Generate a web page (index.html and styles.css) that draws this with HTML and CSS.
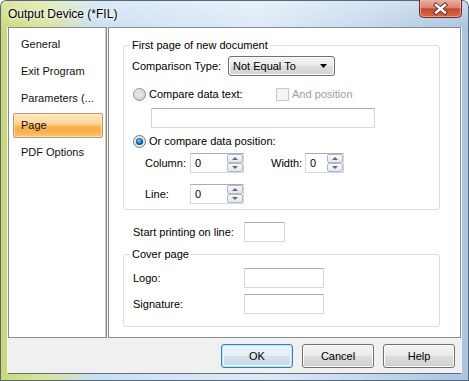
FILE: index.html
```html
<!DOCTYPE html>
<html lang="en">
<head>
    <meta charset="UTF-8">
    <title>Output Device (*FIL)</title>
    <link rel="stylesheet" href="styles.css">
</head>
<body>
    <div class="window">
        <div class="titlebar">
            <span class="title">Output Device (*FIL)</span>
            <button class="close" aria-label="Close">
                <svg width="43" height="18" viewBox="0 0 43 18">
                    <defs>
                        <linearGradient id="closeGrad" x1="0" y1="0" x2="0" y2="1">
                            <stop offset="0" stop-color="#eab3a3"/>
                            <stop offset="0.45" stop-color="#d9826c"/>
                            <stop offset="0.5" stop-color="#c9482c"/>
                            <stop offset="1" stop-color="#d76a48"/>
                        </linearGradient>
                    </defs>
                    <path d="M0.5 0 V13.5 Q0.5 17.5 4.5 17.5 H38.5 Q42.5 17.5 42.5 13.5 V0" fill="url(#closeGrad)" stroke="#6b2b22"/>
                    <path d="M1.5 0 V13 Q1.5 16.5 5 16.5 H38 Q41.5 16.5 41.5 13 V0" fill="none" stroke="#f2c8bb" stroke-opacity="0.6"/>
                    <path d="M17 5 L26 12.5 M26 5 L17 12.5" stroke="#4a2a26" stroke-width="4.2" stroke-linecap="square"/>
                    <path d="M17 5 L26 12.5 M26 5 L17 12.5" stroke="#ffffff" stroke-width="2.4" stroke-linecap="square"/>
                </svg>
            </button>
        </div>

        <div class="client">
            <div class="panels">
                <ul class="nav">
                    <li>General</li>
                    <li>Exit Program</li>
                    <li>Parameters (...</li>
                    <li class="active">Page</li>
                    <li>PDF Options</li>
                </ul>

                <div class="page">
                    <fieldset class="group">
                        <legend>First page of new document</legend>
                        <div class="rows">
                            <div class="row row-type">
                                <span class="label label-type">Comparison Type:</span>
                                <div class="select">
                                    <span>Not Equal To</span>
                                    <svg width="7" height="4" viewBox="0 0 7 4"><path d="M0 0 H7 L3.5 4 Z" fill="#000"/></svg>
                                </div>
                            </div>
                            <div class="row row-text">
                                <span class="radio-label">
                                    <svg class="radio" width="13" height="13" viewBox="0 0 13 13">
                                        <defs>
                                            <radialGradient id="radioOff" cx="0.4" cy="0.35" r="0.7">
                                                <stop offset="0" stop-color="#ffffff"/>
                                                <stop offset="1" stop-color="#c8c8c8"/>
                                            </radialGradient>
                                        </defs>
                                        <circle cx="6.5" cy="6.5" r="6" fill="url(#radioOff)" stroke="#8f8f8f"/>
                                        <circle cx="6.5" cy="6.5" r="4" fill="#e4e4e4" stroke="#d0d0d0" stroke-width="0.6"/>
                                    </svg>
                                    Compare data text:
                                </span>
                                <span class="checkbox"></span>
                                <span class="disabled">And position</span>
                            </div>
                            <div class="row row-input">
                                <div class="textbox textbox-wide"></div>
                            </div>
                            <div class="row row-pos">
                                <span class="radio-label">
                                    <svg class="radio" width="13" height="13" viewBox="0 0 13 13">
                                        <defs>
                                            <radialGradient id="radioOn" cx="0.45" cy="0.4" r="0.6">
                                                <stop offset="0" stop-color="#8fd0f5"/>
                                                <stop offset="0.6" stop-color="#1f6fae"/>
                                                <stop offset="1" stop-color="#0f3f73"/>
                                            </radialGradient>
                                        </defs>
                                        <circle cx="6.5" cy="6.5" r="6" fill="#eaeaea" stroke="#6f7a84"/>
                                        <circle cx="6.5" cy="6.5" r="3.6" fill="url(#radioOn)"/>
                                    </svg>
                                    Or compare data position:
                                </span>
                            </div>
                            <div class="row row-column">
                                <span class="label label-num">Column:</span>
                                <div class="spin spin-col">
                                    <span class="value">0</span>
                                    <span class="spinner">
                                        <span class="spin-up"></span>
                                        <span class="spin-down"></span>
                                    </span>
                                </div>
                                <span class="label label-width">Width:</span>
                                <div class="spin spin-width">
                                    <span class="value">0</span>
                                    <span class="spinner">
                                        <span class="spin-up"></span>
                                        <span class="spin-down"></span>
                                    </span>
                                </div>
                            </div>
                            <div class="row row-line">
                                <span class="label label-num">Line:</span>
                                <div class="spin spin-col">
                                    <span class="value">0</span>
                                    <span class="spinner">
                                        <span class="spin-up"></span>
                                        <span class="spin-down"></span>
                                    </span>
                                </div>
                            </div>
                        </div>
                    </fieldset>

                    <div class="row start-row">
                        <span class="label label-field">Start printing on line:</span>
                        <div class="textbox textbox-small"></div>
                    </div>

                    <fieldset class="group cover">
                        <legend>Cover page</legend>
                        <div class="rows">
                            <div class="row row-logo">
                                <span class="label label-cover">Logo:</span>
                                <div class="textbox textbox-cover"></div>
                            </div>
                            <div class="row row-sign">
                                <span class="label label-cover">Signature:</span>
                                <div class="textbox textbox-cover"></div>
                            </div>
                        </div>
                    </fieldset>
                </div>
            </div>

            <div class="buttons">
                <button class="btn btn-default">OK</button>
                <button class="btn">Cancel</button>
                <button class="btn">Help</button>
            </div>
        </div>
    </div>
</body>
</html>
```

FILE: styles.css
```css
* {
    margin: 0;
    padding: 0;
    box-sizing: border-box;
}

body {
    width: 469px;
    height: 381px;
    overflow: hidden;
    font-family: "Liberation Sans", Arial, sans-serif;
    font-size: 11px;
    color: #000;
    background: #fff;
}

.window {
    width: 469px;
    height: 381px;
    display: flex;
    flex-direction: column;
    border-radius: 6px 6px 0 0;
    background:
        linear-gradient(180deg, rgba(255, 255, 255, 0.35) 0, rgba(255, 255, 255, 0) 30px),
        linear-gradient(90deg, #cad878 0, #dae49a 45px, #c9dff2 95px, #d4e5f5 180px, #dceaf7 260px, #c6daee 360px, #aac4e0 469px);
    box-shadow: inset 0 0 0 1px #55677a;
}

/* Title bar */
.titlebar {
    height: 27px;
    display: flex;
    align-items: center;
}

.title {
    padding-left: 8px;
    font-size: 12px;
    color: #000;
    text-shadow: 0 0 6px #fff, 0 0 3px #fff;
}

.close {
    margin-left: auto;
    margin-right: 7px;
    align-self: flex-start;
    width: 43px;
    height: 18px;
    border: none;
    background: none;
    display: block;
}

.close svg {
    display: block;
}

/* Client area */
.client {
    height: 346px;
    margin: 0 8px;
    background: #f0f0f0;
    display: flex;
    flex-direction: column;
    box-shadow: 0 1px 0 #5f6f80, -1px 0 0 #eef4f9, 1px 0 0 #eef4f9;
}

.panels {
    display: flex;
    gap: 1px;
    height: 311px;
}

/* Left navigation */
.nav {
    list-style: none;
    width: 99px;
    background: #fff;
    border: 1px solid #8b8b8b;
    box-shadow: inset -1px 0 0 #c9c9c9;
    padding: 4px 0 0 4px;
}

.nav li {
    width: 90px;
    height: 25px;
    line-height: 23px;
    margin-bottom: 2px;
    padding-left: 7px;
    border: 1px solid transparent;
    border-radius: 2px;
    white-space: nowrap;
    color: #111;
}

.nav li.active {
    border-color: #b9986a;
    background: linear-gradient(180deg, #fde6be 0, #fcd79e 40%, #f9b04c 58%, #f8b250 80%, #fcc77e 100%);
    box-shadow: inset 0 0 0 1px rgba(255, 240, 210, 0.6);
}

/* Right page */
.page {
    width: 353px;
    background: #fff;
    border: 1px solid #898c95;
    padding-top: 10px;
}

.group {
    margin-left: 14px;
    width: 317px;
    border: 1px solid #d5dfe5;
    border-radius: 3px;
    padding: 0;
}

.group legend {
    margin-left: 6px;
    padding: 0 2px;
    line-height: 14px;
}

.rows {
    padding: 4px 0 5px 8px;
}

.row {
    display: flex;
    align-items: center;
    height: 20px;
}

.row-text {
    margin-top: 8px;
}

.row-input {
    margin-top: 4px;
}

.row-pos {
    margin-top: 3px;
}

.row-column {
    margin-top: 2px;
}

.row-line {
    margin-top: 11px;
}

.label-type {
    width: 96px;
}

.select {
    width: 107px;
    height: 20px;
    display: flex;
    align-items: center;
    justify-content: space-between;
    padding: 0 7px 0 4px;
    border: 1px solid #707070;
    border-radius: 3px;
    background: linear-gradient(180deg, #f4f4f4 0, #ebebeb 48%, #dedede 52%, #d2d2d2 100%);
    box-shadow: inset 0 0 0 1px #fbfbfb;
}

.radio-label {
    display: flex;
    align-items: center;
    gap: 3px;
    margin-left: 1px;
}

.row-text .radio-label {
    width: 143px;
}

.radio {
    display: block;
    flex: none;
}

.checkbox {
    width: 13px;
    height: 13px;
    border: 1px solid #c8c8c8;
    background: #f4f4f4;
    margin-right: 3px;
}

.disabled {
    color: #9aa1a8;
}

.textbox {
    height: 20px;
    background: #fff;
    border: 1px solid #d5d9df;
    border-top-color: #abadb3;
    border-radius: 1px;
}

.textbox-wide {
    margin-left: 19px;
    width: 224px;
}

.label-num {
    margin-left: 13px;
    width: 45px;
}

.label-width {
    margin-left: 27px;
    width: 34px;
}

.spin {
    height: 20px;
    display: flex;
    align-items: stretch;
    border: 1px solid #d5d9df;
    border-top-color: #abadb3;
    background: #fff;
}

.spin-col {
    width: 54px;
}

.spin-width {
    width: 39px;
}

.spin .value {
    flex: 1;
    padding-left: 4px;
    line-height: 18px;
}

.spinner {
    width: 16px;
    display: flex;
    flex-direction: column;
    gap: 0;
}

.spin-up,
.spin-down {
    flex: 1;
    border: 1px solid #b2b8be;
    border-radius: 2px;
    background: linear-gradient(180deg, #f7f8f9 0, #e3e7eb 100%);
    display: flex;
    align-items: center;
    justify-content: center;
}

.spin-up::after,
.spin-down::after {
    content: "";
    width: 0;
    height: 0;
    border-left: 3px solid transparent;
    border-right: 3px solid transparent;
}

.spin-up::after {
    border-bottom: 3px solid #4f6a94;
}

.spin-down::after {
    border-top: 3px solid #4f6a94;
}

.start-row {
    margin: 12px 0 0 24px;
}

.label-field {
    width: 111px;
}

.textbox-small {
    width: 41px;
}

.cover {
    margin-top: 5px;
}

.cover .rows {
    padding: 7px 0 12px 9px;
}

.row-sign {
    margin-top: 6px;
}

.label-cover {
    width: 111px;
}

.textbox-cover {
    width: 80px;
}

/* Dialog buttons */
.buttons {
    display: flex;
    justify-content: flex-end;
    gap: 9px;
    padding: 6px 6px 0 0;
}

.btn {
    width: 72px;
    height: 24px;
    font-family: "Liberation Sans", Arial, sans-serif;
    font-size: 11px;
    color: #000;
    border: 1px solid #707070;
    border-radius: 3px;
    background: linear-gradient(180deg, #f2f2f2 0, #ebebeb 48%, #dddddd 52%, #cfcfcf 100%);
    box-shadow: inset 0 0 0 1px #fcfcfc;
}

.btn-default {
    border-color: #3c7fb1;
    background: linear-gradient(180deg, #eef5f9 0, #e4eef4 48%, #d4e2ec 52%, #c8d9e6 100%);
    box-shadow: inset 0 0 0 1px #b6e3f8, inset 0 0 0 2px #e9f6fc;
}
```
